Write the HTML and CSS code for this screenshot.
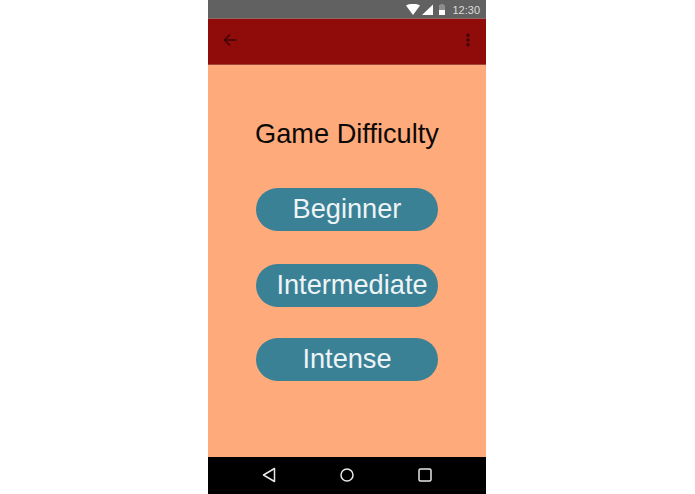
FILE: index.html
```html
<!DOCTYPE html>
<html lang="en">
<head>
<meta charset="utf-8">
<title>Game Difficulty</title>
<link rel="stylesheet" href="styles.css">
</head>
<body>
<div class="phone">
  <div class="status">
    <svg class="status-icon" width="39" height="12" viewBox="0 0 39 12">
      <path d="M0 1.5 C4 -0.8 10 -0.8 14 1.5 L7 11 Z" fill="#fff"/>
      <path d="M16 11 L27 0.5 V11 Z" fill="#fff"/>
      <rect x="33" y="1" width="6" height="10" fill="#8d8d8d"/>
      <rect x="33" y="6" width="6" height="5" fill="#fff"/>
      <rect x="34.5" y="0" width="3" height="1" fill="#8d8d8d"/>
    </svg>
    <span class="clock">12:30</span>
  </div>
  <div class="toolbar">
    <svg width="14" height="14" viewBox="0 0 14 14"><path d="M13.5 7 H1.5 M7 1.5 L1.5 7 L7 12.5" fill="none" stroke="#3f0404" stroke-width="1.5"/></svg>
    <svg width="4" height="14" viewBox="0 0 4 14"><circle cx="2" cy="2.2" r="1.7" fill="#3f0404"/><circle cx="2" cy="7" r="1.7" fill="#3f0404"/><circle cx="2" cy="11.8" r="1.7" fill="#3f0404"/></svg>
  </div>
  <main class="content">
    <h1 class="title">Game Difficulty</h1>
    <button class="pill pill-first">Beginner</button>
    <button class="pill pill-offset pill-second">Intermediate</button>
    <button class="pill pill-third">Intense</button>
  </main>
  <div class="nav">
    <svg width="14" height="16" viewBox="0 0 14 16"><path d="M12.5 1.5 V14.5 L1.5 8 Z" fill="none" stroke="#e8e8e8" stroke-width="1.5" stroke-linejoin="round"/></svg>
    <svg width="14" height="14" viewBox="0 0 14 14"><circle cx="7" cy="7" r="6" fill="none" stroke="#e8e8e8" stroke-width="1.5"/></svg>
    <svg width="14" height="14" viewBox="0 0 14 14"><rect x="1" y="1" width="12" height="12" rx="1.5" fill="none" stroke="#e8e8e8" stroke-width="1.5"/></svg>
  </div>
</div>
</body>
</html>
```
FILE: styles.css
```css
* { box-sizing: border-box; }
html, body { margin: 0; height: 100%; background: #fff; }
body { font-family: "Liberation Sans", Arial, sans-serif; overflow: hidden; }
.phone {
  width: 278px;
  height: 494px;
  margin-left: 208px;
  display: flex;
  flex-direction: column;
}
.status {
  height: 19px;
  background: #616161;
  border-bottom: 1px solid #8a6a62;
  display: flex;
  align-items: center;
  justify-content: flex-end;
  padding: 1px 6px 0 0;
  gap: 7px;
}
.clock { color: #dcdcdc; font-size: 11px; line-height: 16px; }
.toolbar {
  height: 46px;
  background: #8f0c0a;
  border-bottom: 1px solid #a3433a;
  display: flex;
  align-items: center;
  justify-content: space-between;
  padding: 0 16px 4px 15px;
}
.content {
  flex: 1;
  background: #ffaa7b;
  display: flex;
  flex-direction: column;
  align-items: center;
}
.title {
  margin: 54px 0 0;
  font-size: 27.2px;
  font-weight: 400;
  line-height: 30px;
  color: #0c0a08;
}
.pill {
  width: 182.5px;
  height: 43px;
  border: 0;
  border-radius: 22px;
  background: #3a8196;
  color: #eef4f6;
  font: 27.2px/40px "Liberation Sans", Arial, sans-serif;
  padding: 0 0 2px;
}
.pill-first { margin-top: 39px; }
.pill-second { margin-top: 33px; }
.pill-third { margin-top: 31px; }
.pill-offset { padding-left: 10px; white-space: nowrap; }
.nav {
  height: 37px;
  background: #000;
  display: flex;
  align-items: center;
  justify-content: space-between;
  padding: 0 54px 2px 54px;
}
```
